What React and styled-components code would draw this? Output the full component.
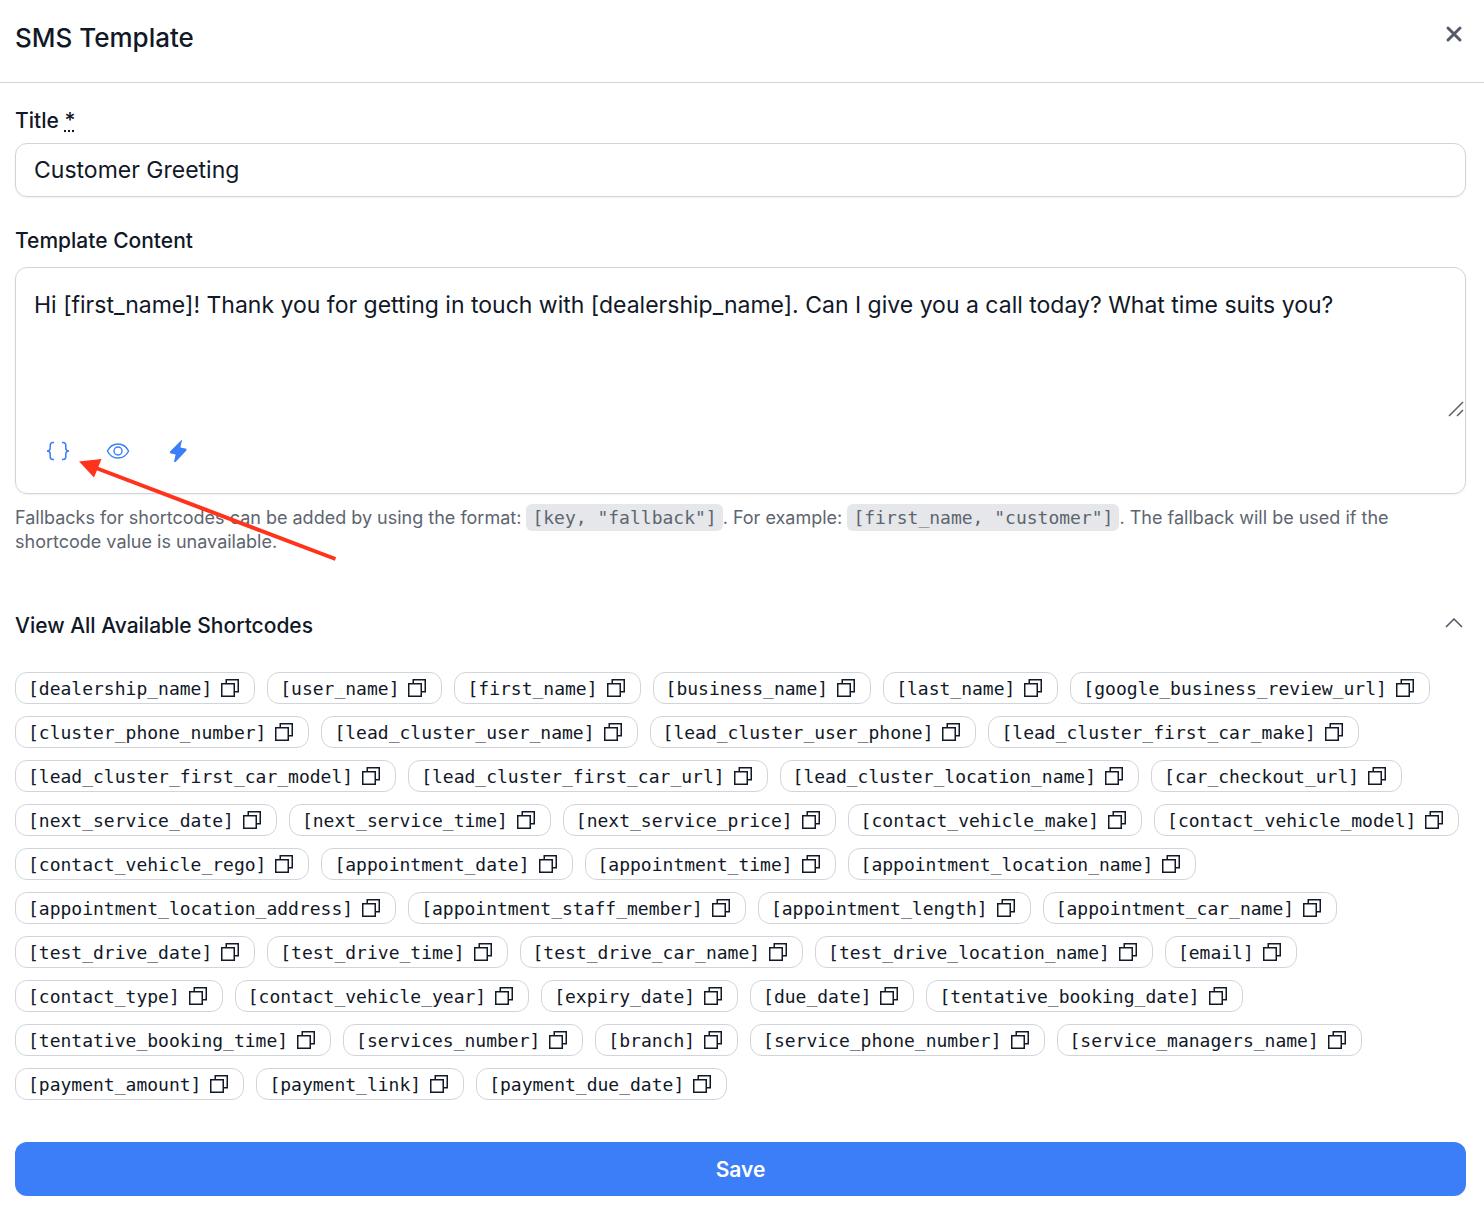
import styled, { createGlobalStyle } from "styled-components";

const GlobalStyle = createGlobalStyle`
  * {
    box-sizing: border-box;
  }
  body {
    margin: 0;
    background: #ffffff;
    color: #111827;
    font-family: Inter, "Liberation Sans", sans-serif;
  }
`;

const Header = styled.header`
  display: flex;
  align-items: flex-start;
  justify-content: space-between;
  padding: 20px 18px 26px 15px;
  border-bottom: 1px solid #d1d5db;
`;
const Heading = styled.h1`
  margin: 0;
  font-size: 26px;
  line-height: 36px;
  font-weight: 500;
`;
const IconButton = styled.button`
  display: flex;
  align-items: center;
  justify-content: center;
  width: 24px;
  height: ${(props) => props.$height || 28}px;
  padding: 0;
  border: none;
  background: none;
  color: ${(props) => props.$color};
  cursor: pointer;
`;
const Form = styled.form`
  padding: 24px 18px 24px 15px;
`;
const Label = styled.label`
  display: block;
  margin-bottom: ${(props) => props.$gap}px;
  font-size: 21px;
  line-height: 28px;
  font-weight: 500;
`;
const Required = styled.abbr`
  text-decoration: underline dotted;
`;
const TitleInput = styled.input`
  display: block;
  width: 100%;
  height: 54px;
  margin-bottom: 30px;
  padding: 0 18px;
  border: 1px solid #d1d5db;
  border-radius: 12px;
  box-shadow: 0 1px 2px rgba(0, 0, 0, 0.06);
  font: inherit;
  font-size: 23px;
  color: inherit;
`;
const Field = styled.div`
  position: relative;
`;
const Editor = styled.div`
  border: 1px solid #d1d5db;
  border-radius: 12px;
  box-shadow: 0 1px 2px rgba(0, 0, 0, 0.06);
`;
const TextWrap = styled.div`
  position: relative;
`;
const Content = styled.textarea`
  display: block;
  width: 100%;
  height: 149px;
  padding: 19px 18px;
  border: none;
  border-radius: 12px;
  background: none;
  resize: none;
  font: inherit;
  font-size: 23px;
  line-height: 36px;
  color: inherit;
`;
const Grip = styled.svg`
  position: absolute;
  right: 1px;
  bottom: 0;
`;
const Toolbar = styled.div`
  display: flex;
  gap: 36px;
  padding: 20px 30px 28px;
`;
const Arrow = styled.svg`
  position: absolute;
  left: 60px;
  bottom: -8px;
  pointer-events: none;
`;
const Help = styled.p`
  margin: 12px 0 58px;
  font-size: 18px;
  line-height: 24px;
  color: #5d656f;
`;
const Code = styled.code`
  padding: 3px 6px;
  border-radius: 6px;
  background: #e5e7eb;
  font-family: "DejaVu Sans Mono", monospace;
  font-size: 18px;
`;
const SectionHead = styled.div`
  display: flex;
  align-items: flex-start;
  justify-content: space-between;
  margin-bottom: 32px;
`;
const SectionTitle = styled.h2`
  margin: 0;
  font-size: 21px;
  line-height: 28px;
  font-weight: 500;
`;
const Chips = styled.div`
  display: flex;
  flex-wrap: wrap;
  gap: 12px;
`;
const Chip = styled.button`
  display: flex;
  align-items: center;
  gap: 6px;
  height: 32px;
  padding: 0 12px;
  border: 1px solid #d1d5db;
  border-radius: 12px;
  background: #ffffff;
  font-family: "DejaVu Sans Mono", monospace;
  font-size: 18px;
  color: inherit;
  cursor: pointer;
`;
const SaveButton = styled.button`
  display: block;
  width: 100%;
  height: 54px;
  margin-top: 42px;
  border: none;
  border-radius: 12px;
  background: #3b7ef8;
  color: #ffffff;
  font: inherit;
  font-size: 21px;
  font-weight: 600;
  cursor: pointer;
`;

const shortcodes = [
  "dealership_name",
  "user_name",
  "first_name",
  "business_name",
  "last_name",
  "google_business_review_url",
  "cluster_phone_number",
  "lead_cluster_user_name",
  "lead_cluster_user_phone",
  "lead_cluster_first_car_make",
  "lead_cluster_first_car_model",
  "lead_cluster_first_car_url",
  "lead_cluster_location_name",
  "car_checkout_url",
  "next_service_date",
  "next_service_time",
  "next_service_price",
  "contact_vehicle_make",
  "contact_vehicle_model",
  "contact_vehicle_rego",
  "appointment_date",
  "appointment_time",
  "appointment_location_name",
  "appointment_location_address",
  "appointment_staff_member",
  "appointment_length",
  "appointment_car_name",
  "test_drive_date",
  "test_drive_time",
  "test_drive_car_name",
  "test_drive_location_name",
  "email",
  "contact_type",
  "contact_vehicle_year",
  "expiry_date",
  "due_date",
  "tentative_booking_date",
  "tentative_booking_time",
  "services_number",
  "branch",
  "service_phone_number",
  "service_managers_name",
  "payment_amount",
  "payment_link",
  "payment_due_date",
];

const CloseIcon = () => (
  <svg width="24" height="24" viewBox="0 0 24 24" fill="none" stroke="currentColor" strokeWidth="3" strokeLinecap="round">
    <path d="M6 6l12 12M18 6L6 18" />
  </svg>
);

const BracesIcon = () => (
  <svg width="24" height="24" viewBox="0 0 24 24" fill="none" stroke="currentColor" strokeWidth="1.5">
    <path d="M8 3.5H7Q4.2 3.5 4.2 6.3V9Q4.2 12 1 12Q4.2 12 4.2 15V17.7Q4.2 20.5 7 20.5H8" />
    <path d="M16 3.5h1q2.8 0 2.8 2.8V9q0 3 3.2 3q-3.2 0-3.2 3v2.7q0 2.8-2.8 2.8h-1" />
  </svg>
);

const EyeIcon = () => (
  <svg width="24" height="24" viewBox="0 0 24 24" fill="none" stroke="currentColor" strokeWidth="1.4">
    <path d="M1.4 12C3.6 7.6 7.4 5 12 5s8.4 2.6 10.6 7c-2.2 4.400-6 7-10.600 7S3.600 16.400 1.400 12z" />
    <circle cx="12" cy="12" r="4" />
  </svg>
);

const BoltIcon = () => (
  <svg width="24" height="24" viewBox="0 0 24 24" fill="currentColor">
    <path d="M15.500 1L4 12.500V14.300L9.600 15.600L8 23H9.500L20.400 11.500V9.700L14.400 8.400L16 1z" />
  </svg>
);

const ChevronIcon = () => (
  <svg width="24" height="24" viewBox="0 0 24 24" fill="none" stroke="currentColor" strokeWidth="1.5">
    <path d="M4 16l8-8 8 8" />
  </svg>
);

const CopyIcon = () => (
  <svg width="24" height="24" viewBox="0 0 24 24" fill="none" stroke="currentColor" strokeWidth="1.5">
    <path d="M3.750 7.750h12.500v12.500H3.750z" />
    <path d="M8.250 7.750v-4h12v12h-4" />
  </svg>
);

export default function App() {
  return (
    <>
      <GlobalStyle />
      <Header>
        <Heading>SMS Template</Heading>
        <IconButton type="button" aria-label="Close" $color="#545b67">
          <CloseIcon />
        </IconButton>
      </Header>
      <Form onSubmit={(e) => e.preventDefault()}>
        <Label htmlFor="title" $gap={8}>
          Title <Required title="required">*</Required>
        </Label>
        <TitleInput id="title" defaultValue="Customer Greeting" />
        <Label htmlFor="content" $gap={12}>
          Template Content
        </Label>
        <Editor>
          <TextWrap>
            <Content
              id="content"
              defaultValue="Hi [first_name]! Thank you for getting in touch with [dealership_name]. Can I give you a call today? What time suits you?"
            />
            <Grip width="16" height="16" viewBox="0 0 16 16" stroke="#5f5f5f" strokeWidth="1.5">
              <path d="M1 15L15 1M9 15l6-6" />
            </Grip>
          </TextWrap>
          <Toolbar>
            <IconButton type="button" aria-label="Insert shortcode" $color="#3b7ef8">
              <BracesIcon />
            </IconButton>
            <IconButton type="button" aria-label="Preview" $color="#3b7ef8">
              <EyeIcon />
            </IconButton>
            <IconButton type="button" aria-label="Quick actions" $color="#3b7ef8">
              <BoltIcon />
            </IconButton>
          </Toolbar>
        </Editor>
        <Field>
          <Help>
            Fallbacks for shortcodes can be added by using the format: <Code>[key, "fallback"]</Code>. For example:{" "}
            <Code>[first_name, "customer"]</Code>. The fallback will be used if the shortcode value is unavailable.
          </Help>
          <Arrow width="264" height="104" viewBox="75 457 264 104">
            <path d="M335.500 558L96 467" stroke="#ff321c" strokeWidth="4" />
            <path d="M79 460.500L101.500 458L94 476.500z" fill="#ff321c" />
          </Arrow>
        </Field>
        <SectionHead>
          <SectionTitle>View All Available Shortcodes</SectionTitle>
          <IconButton type="button" aria-label="Collapse shortcodes" $color="#4b5563" $height={22}>
            <ChevronIcon />
          </IconButton>
        </SectionHead>
        <Chips>
          {shortcodes.map((code) => (
            <Chip type="button" key={code}>
              [{code}]
              <CopyIcon />
            </Chip>
          ))}
        </Chips>
        <SaveButton type="submit">Save</SaveButton>
      </Form>
    </>
  );
}
